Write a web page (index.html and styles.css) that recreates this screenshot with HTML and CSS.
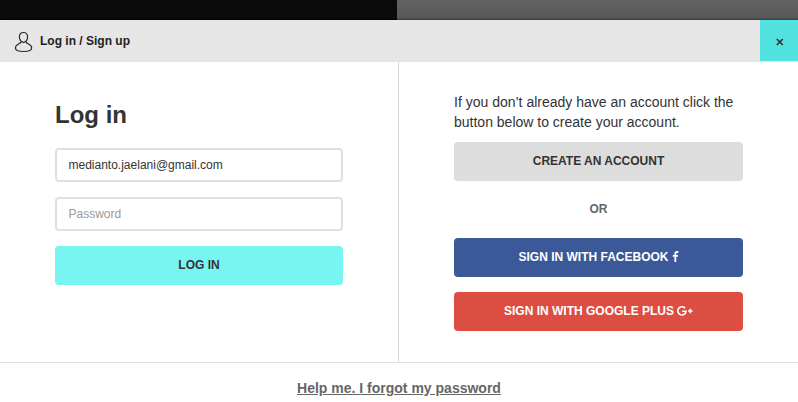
FILE: index.html
```html
<!DOCTYPE html>
<html lang="en">
<head>
<meta charset="utf-8">
<title>Log in / Sign up</title>
<link rel="stylesheet" href="styles.css">
</head>
<body>
<div class="backdrop"><div class="backdrop-dark"></div><div class="backdrop-light"></div></div>
<main class="modal">
  <header class="modal-header">
    <svg class="user-icon" width="20" height="22" viewBox="0 0 20 22" fill="none" stroke="#2b2b2b" stroke-width="1.2">
      <path d="M9.5 1.5C6.7 1.5 5.4 3.4 5.4 6C5.4 8.6 7 11.3 9.5 11.3S13.6 8.6 13.6 6C13.6 3.4 12.3 1.5 9.5 1.5Z"/>
      <path d="M6.9 11C6.3 13.4 1.4 13 1.4 17C1.4 19.6 5 20.5 9.5 20.5S17.7 19.6 17.7 17C17.7 13 12.7 13.4 12.1 11"/>
    </svg>
    <h1 class="modal-title">Log in / Sign up</h1>
    <button class="close" aria-label="Close"><svg width="9" height="8" viewBox="0 0 9 8" stroke="#333" stroke-width="1.7"><path d="M1.8 1L7.8 7M7.8 1L1.8 7"/></svg></button>
  </header>
  <div class="columns">
    <form class="login">
      <h2 class="heading">Log in</h2>
      <input class="field" type="text" value="medianto.jaelani@gmail.com">
      <input class="field" type="password" placeholder="Password">
      <button class="btn btn-login" type="button"><span>LOG IN</span></button>
    </form>
    <section class="signup">
      <p class="intro">If you don’t already have an account click the<br>button below to create your account.</p>
      <button class="btn btn-create"><span>CREATE AN ACCOUNT</span></button>
      <p class="or">OR</p>
      <button class="btn btn-facebook"><span>SIGN IN WITH FACEBOOK</span><svg class="facebook-icon" width="7" height="11" viewBox="0 0 7 11" fill="none" stroke="#fff" stroke-width="1.8"><path d="M6.3 1H5Q3.3 1 3.3 2.8V11M.7 4.8H6"/></svg></button>
      <button class="btn btn-google"><span>SIGN IN WITH GOOGLE PLUS</span><svg class="google-icon" width="16" height="10" viewBox="0 0 16 10" fill="none" stroke="#fff" stroke-width="1.6"><path d="M8 2.1A4.1 4.1 0 1 0 9 5.3H5.1M11 5H15.6M13.3 2.7V7.3"/></svg></button>
    </section>
  </div>
  <footer class="modal-footer"><a class="forgot" href="#">Help me. I forgot my password</a></footer>
</main>
</body>
</html>
```

FILE: styles.css
```css
* { box-sizing: border-box; }
body {
  margin: 0;
  height: 402px;
  overflow: hidden;
  background: #fff;
  color: #333;
  font-family: "Liberation Sans", Arial, sans-serif;
}
h1, h2, p { margin: 0; }
button, input { font: inherit; color: inherit; }
button { border: 0; padding: 0; }
.backdrop { display: flex; height: 20px; }
.backdrop-dark { width: 397px; background: linear-gradient(#0b0b0b 18px, #000); }
.backdrop-light { flex: 1; background: linear-gradient(#626262, #585858 18px, #423e3e 19px); }
.modal-header {
  display: flex;
  align-items: center;
  height: 42px;
  padding-left: 14px;
  background: #e6e6e6;
  border-radius: 2px 0 0 0;
}
.user-icon { margin-top: 2px; }
.modal-title { flex: 1; margin-left: 6px; font-size: 12px; line-height: 14px; color: #222; }
.close {
  display: flex;
  align-items: center;
  justify-content: center;
  align-self: flex-start;
  width: 38px;
  height: 41px;
  padding-top: 3px;
  background: #52e3e1;
}
.columns { display: flex; height: 300px; }
.login, .signup { display: flex; flex-direction: column; }
.login { width: 399px; padding: 38px 55px 0; border-right: 1px solid #d8d8d8; }
.signup { flex: 1; padding: 30px 55px 0; }
.heading { height: 48px; font-size: 24px; line-height: 30px; }
.field {
  width: 100%;
  height: 34px;
  margin-bottom: 15px;
  padding: 0 11.5px;
  border: 2px solid #e0e0e0;
  border-radius: 4px;
  background: #fff;
  font-size: 12px;
  outline: 0;
}
.field::placeholder { color: #999; opacity: 1; }
.btn {
  display: flex;
  align-items: center;
  justify-content: center;
  flex: none;
  width: 100%;
  height: 39px;
  padding-bottom: 2px;
  border-radius: 4px;
  font-size: 12px;
  font-weight: 700;
}
.btn-login { background: #78f4f1; }
.btn-create { background: #ddd; }
.btn-facebook { margin-bottom: 15px; background: #3b5998; color: #fff; }
.btn-google { background: #dc4e41; color: #fff; }
.facebook-icon { margin-left: 3px; }
.google-icon { margin-left: 3px; }
.intro { height: 50px; font-size: 14px; line-height: 20px; }
.or { height: 57px; padding-top: 18px; font-size: 12px; line-height: 20px; font-weight: 700; text-align: center; color: #666; }
.modal-footer { height: 40px; padding-top: 15px; border-top: 1px solid #e0e0e0; text-align: center; }
.forgot { display: inline-block; font-size: 14px; line-height: 20px; font-weight: 700; color: #666; text-decoration: underline; }
```
